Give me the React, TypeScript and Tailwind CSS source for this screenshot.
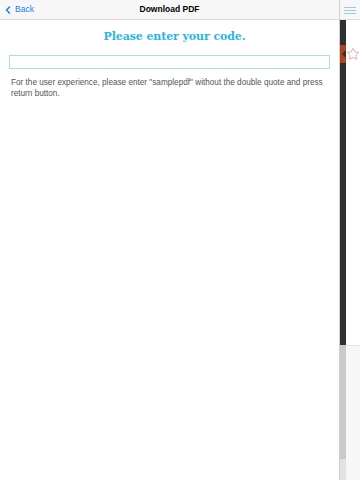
import { ChevronLeft } from "lucide-react";

const HELV = "font-['Liberation_Sans',Arial,sans-serif]";

function Header() {
  return (
    <div className="relative flex h-[20px] items-center border-b border-[#d9d9d9] bg-[#f7f7f7]">
      <div className="flex items-center pl-[2px] text-[#1a7cf5]">
        <ChevronLeft size={12} strokeWidth={3} />
        <span className="ml-[1px] text-[8.5px]">Back</span>
      </div>
      <div className="absolute inset-x-0 text-center text-[8.5px] font-bold text-black pointer-events-none">
        Download PDF
      </div>
    </div>
  );
}

function Sidebar() {
  return (
    <div className="flex w-[21px] flex-col border-l border-[#d0d0d0]">
      <div className="flex h-[20px] flex-col items-center justify-center gap-[2px] border-b border-[#e0e0e0] bg-[#f7f7f7] pt-[1px]">
        <div className="h-[1px] w-[12px] bg-[#9cc8ef]" />
        <div className="h-[1px] w-[12px] bg-[#9cc8ef]" />
        <div className="h-[1px] w-[12px] bg-[#9cc8ef]" />
      </div>
      <div className="flex flex-1">
        <div className="flex w-[8px] flex-col">
          <div className="h-[25px] bg-[#2f2f2f]" />
          <div className="relative h-[18px] bg-[#a9441f]">
            <div className="absolute right-0 top-[5px] h-0 w-0 border-y-[4px] border-r-[4px] border-y-transparent border-r-[#2f2f2f]" />
          </div>
          <div className="h-[282px] bg-[#2f2f2f]" />
          <div className="h-[114px] bg-[#c9c9c9]" />
          <div className="flex-1 bg-[#e2e2e2]" />
        </div>
        <div className="flex flex-1 flex-col bg-white">
          <div className="h-[27px]" />
          <svg width="14" height="14" viewBox="0 0 24 24" fill="none" stroke="#eea3a3" strokeWidth="1.6">
            <path d="M12 2l3.1 6.3 6.9 1-5 4.9 1.2 6.8L12 17.8 5.8 21l1.2-6.8-5-4.9 6.9-1z" />
          </svg>
          <div className="h-[284px]" />
          <div className="flex-1 border-t border-[#e6e6e6] bg-[#f7f7f7]" />
        </div>
      </div>
    </div>
  );
}

export default function App() {
  return (
    <div className={`flex h-[480px] w-[360px] overflow-hidden bg-white ${HELV}`}>
      <div className="flex w-[339px] flex-col">
        <Header />
        <div className="px-[9px]">
          <h1 className="mt-[10px] pl-[10px] text-center font-['DejaVu_Serif',serif] text-[11px] font-bold leading-[14px] tracking-[-0.1px] text-[#29b4e8]">
            Please enter your code.
          </h1>
          <div className="mt-[11px] h-[14px] w-[321px] border border-[#a9ddf0] bg-white" />
          <p className="mt-[8px] pl-[2px] text-[8.2px] leading-[11px] text-[#555]">
            For the user experience, please enter "samplepdf" without the double quote and press return button.
          </p>
        </div>
      </div>
      <Sidebar />
    </div>
  );
}
